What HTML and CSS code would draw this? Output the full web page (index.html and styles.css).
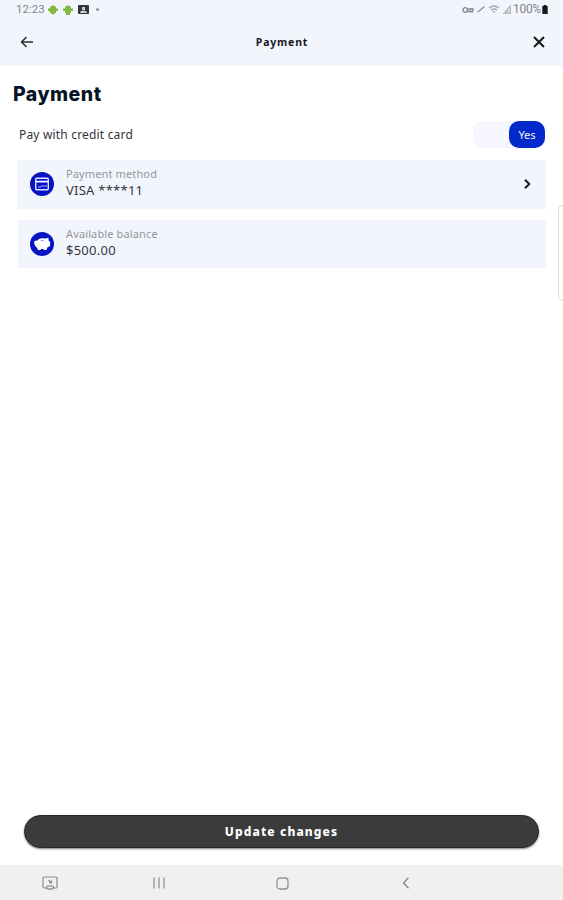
FILE: index.html
```html
<!DOCTYPE html>
<html lang="en">
<head>
    <meta charset="UTF-8">
    <meta name="viewport" content="width=device-width, initial-scale=1.0">
    <title>Payment</title>
    <link rel="stylesheet" href="styles.css">
</head>
<body>
    <div class="status-bar">
        <span class="clock">12:23</span>
        <svg class="android" width="10" height="10" viewBox="0 0 10 10"><path d="M2 3.500a3 3 0 0 1 6 0h2v2.500H8v2H7L5 10 3 8H2V6H0V3.500z"/></svg>
        <svg class="android" width="10" height="10" viewBox="0 0 10 10"><path d="M2 3.500a3 3 0 0 1 6 0h2v2.500H8v2H7V10H3V8H2V6H0V3.500z"/></svg>
        <svg class="screen" width="11" height="9" viewBox="0 0 11 9"><rect width="11" height="9" rx="1" fill="#33343a"/><path d="M4 2h3v3H4zM2 8a3.500 2.500 0 0 1 7 0z" fill="#c9cad2"/></svg>
        <span class="dot"></span>
        <div class="status-right">
            <svg width="12" height="8" viewBox="0 0 12 8" fill="none" stroke="#808188" stroke-width="1.300"><circle cx="3.200" cy="4" r="2.300"/><path d="M5.500 3H11v1.500L10 6 8.500 4.800 7.500 6 6 5"/></svg>
            <svg width="10" height="9" viewBox="0 0 10 9"><path d="M1 8l1-2 6-5 1 1-6 5z" fill="#94959b"/></svg>
            <svg width="12" height="9" viewBox="0 0 12 9" fill="none" stroke="#a8a9b0" stroke-width="1.400"><path d="M1 3q5-4 10 0M3 5.200q3-2.500 6 0M5 7.200q1-1 2 0"/></svg>
            <svg width="9" height="9" viewBox="0 0 9 9"><path d="M0 9l5-5v5z" fill="#c4c5cb"/><path d="M5 4l3.500-3.500V9H5z" fill="#d5d6dc" stroke="#a8a9b0" stroke-width=".8"/></svg>
            <span class="percent">100%</span>
            <svg width="6" height="9" viewBox="0 0 6 10"><path d="M1.500 0h3v1.200H6V10H0V1.200h1.500z" fill="#191a1e"/></svg>
        </div>
    </div>

    <header>
        <svg width="14" height="12" viewBox="0 0 14 12" fill="none" stroke="#2b2c31" stroke-width="1.500"><path d="M6.500 1L1.500 6l5 5M1.500 6H13"/></svg>
        <h2>Payment</h2>
        <svg width="12" height="12" viewBox="0 0 12 12" fill="none" stroke="#16171d" stroke-width="2"><path d="M1 1l10 10M11 1L1 11"/></svg>
    </header>

    <main>
        <h1>Payment</h1>
        <div class="toggle-row">
            <span>Pay with credit card</span>
            <div class="toggle"><span class="toggle-on">Yes</span></div>
        </div>
        <div class="card card-method">
            <svg class="card-icon" width="24" height="24" viewBox="0 0 24 24">
                <circle cx="12" cy="12" r="12" fill="#0713c5"/>
                <rect x="5.700" y="6.200" width="12.600" height="11.600" rx="1" fill="none" stroke="#dfe3ff" stroke-width="1.400"/>
                <path d="M6 9.600h12" stroke="#fff" stroke-width="1.700"/>
                <path d="M8 15h3M11 14h6" stroke="#aeb7fa" stroke-width="1.200"/>
            </svg>
            <div class="card-text">
                <span class="label">Payment method</span>
                <span class="value">VISA ****11</span>
            </div>
            <svg class="chevron" width="7" height="10" viewBox="0 0 7 10" fill="none" stroke="#16171d" stroke-width="1.900"><path d="M1 .8L5.300 5 1 9.200"/></svg>
        </div>
        <div class="card card-balance">
            <svg class="card-icon" width="24" height="24" viewBox="0 0 24 24">
                <circle cx="12" cy="12" r="12" fill="#0713c5"/>
                <path d="M4 9.500l1.700-.8 1.500-.2Q9 6.300 12 6.300l3.500.2 3-.8.100 2.500 1.700 2.300-.4 3.800-2.400 1-1 2.700h-2.700l-.5-1H11l-.5 1H7.800l-.7-2.300Q5 14.500 4.500 12.500z" fill="#fff"/>
                <path d="M10.500 8.500h3.500" stroke="#8f99f5" stroke-width=".8"/>
            </svg>
            <div class="card-text">
                <span class="label">Available balance</span>
                <span class="value">$500.00</span>
            </div>
        </div>
    </main>

    <button class="update">Update changes</button>

    <nav>
        <svg width="16" height="14" viewBox="0 0 16 14" fill="none" stroke="#8b8b8b" stroke-width="1.200"><path d="M4 12H2.200A1.200 1.200 0 0 1 1 10.800V2.200A1.200 1.200 0 0 1 2.200 1h11.600A1.200 1.200 0 0 1 15 2.200v8.600a1.200 1.200 0 0 1-1.200 1.200H12"/><ellipse cx="8" cy="11.500" rx="3.600" ry="1.700"/><path d="M6.500 4l3 3M9.500 4.500V7H7"/></svg>
        <svg width="12" height="12" viewBox="0 0 12 12" stroke="#929292" stroke-width="1.300"><path d="M1 .5v11M6 .5v11M11 .5v11"/></svg>
        <svg width="13" height="13" viewBox="0 0 13 13" fill="none" stroke="#929292" stroke-width="1.300"><rect x="1" y="1" width="11" height="11" rx="3"/></svg>
        <svg width="8" height="12" viewBox="0 0 8 12" fill="none" stroke="#858585" stroke-width="1.300"><path d="M6.500.8L1.500 6l5 5.200"/></svg>
    </nav>

    <div class="edge-panel"></div>
</body>
</html>
```
FILE: styles.css
```css
* {
    box-sizing: border-box;
}

body {
    margin: 0;
    height: 100vh;
    display: flex;
    flex-direction: column;
    background: #fff;
    color: #34353c;
    font-family: "Noto Sans", "Open Sans", sans-serif;
    overflow: hidden;
    position: relative;
}

svg {
    display: block;
    flex: none;
}

.status-bar {
    height: 19px;
    padding: 0 15px 0 16px;
    display: flex;
    align-items: center;
    background: #f3f5fd;
    color: #84858b;
    font-family: Roboto, sans-serif;
    font-size: 12px;
    line-height: 19px;
}

.clock {
    width: 28px;
    margin-right: 4px;
    font-size: 11.5px;
    white-space: nowrap;
}

.android {
    margin-right: 5px;
    fill: #83b83b;
}

.dot {
    width: 3px;
    height: 3px;
    margin-left: 7px;
    border-radius: 50%;
    background: #94959b;
}

.status-right {
    margin-left: auto;
    display: flex;
    align-items: center;
    gap: 2px;
}

.percent {
    width: 28px;
    margin-right: -1px;
    letter-spacing: -0.3px;
}

header {
    height: 47px;
    padding: 0 18px 1px 20px;
    display: flex;
    align-items: center;
    justify-content: space-between;
    background: #f3f5fd;
}

header h2 {
    margin: 0 3px 0 0;
    color: #17181d;
    font-size: 10.5px;
    font-weight: 700;
    letter-spacing: 0.8px;
}

main {
    flex: 1;
    padding: 15px 17px 0 13px;
}

h1 {
    margin: 0;
    color: #071426;
    font-family: Inter, sans-serif;
    font-size: 19.5px;
    font-weight: 800;
    line-height: 26px;
    letter-spacing: 0.5px;
}

.toggle-row {
    height: 27px;
    margin: 14px 1px 0 6px;
    display: flex;
    align-items: center;
    justify-content: space-between;
    font-size: 12px;
    letter-spacing: 0.18px;
}

.toggle {
    width: 72px;
    height: 27px;
    display: flex;
    justify-content: flex-end;
    border-radius: 9px;
    background: #f6f7fe;
}

.toggle-on {
    width: 36px;
    border-radius: 10px;
    background: #0429ca;
    color: #f3f5ff;
    font-size: 11px;
    line-height: 27px;
    letter-spacing: 0;
    text-align: center;
}

.card {
    display: flex;
    align-items: center;
    background: #f3f5fd;
}

.card-method {
    height: 49px;
    margin: 12px 0 0 4px;
    padding: 0 15px 1px 13px;
}

.card-balance {
    height: 48px;
    margin: 11px 0 0 5px;
    padding-left: 12px;
}

.card-text {
    margin: -2px 0 0 12px;
    display: flex;
    flex-direction: column;
}

.label {
    color: #94959b;
    font-size: 11px;
    line-height: 15px;
    letter-spacing: 0.13px;
}

.value {
    font-size: 13px;
    line-height: 19px;
    letter-spacing: 0.25px;
}

.chevron {
    margin-left: auto;
}

.update {
    height: 33px;
    margin: 0 24px 17px;
    padding: 0;
    border: 1px solid #272727;
    border-radius: 17px;
    background: #3b3b3b;
    box-shadow: 0 1px 2px rgba(0, 0, 0, 0.5);
    color: #fff;
    font-family: "Noto Sans", sans-serif;
    font-size: 12px;
    font-weight: 800;
    letter-spacing: 1.1px;
}

nav {
    height: 35px;
    padding: 1px 0 0 42px;
    display: flex;
    align-items: center;
    background: #f0f0f0;
}

nav svg:nth-child(2) {
    margin-left: 95px;
}

nav svg:nth-child(3) {
    margin-left: 111px;
}

nav svg:nth-child(4) {
    margin-left: 113px;
}

/* handle of the edge panel, sits over the page */
.edge-panel {
    position: absolute;
    top: 205px;
    right: -5px;
    width: 10px;
    height: 96px;
    border: 1.5px solid #d9d9d9;
    border-radius: 5px;
    background: #fff;
}
```
